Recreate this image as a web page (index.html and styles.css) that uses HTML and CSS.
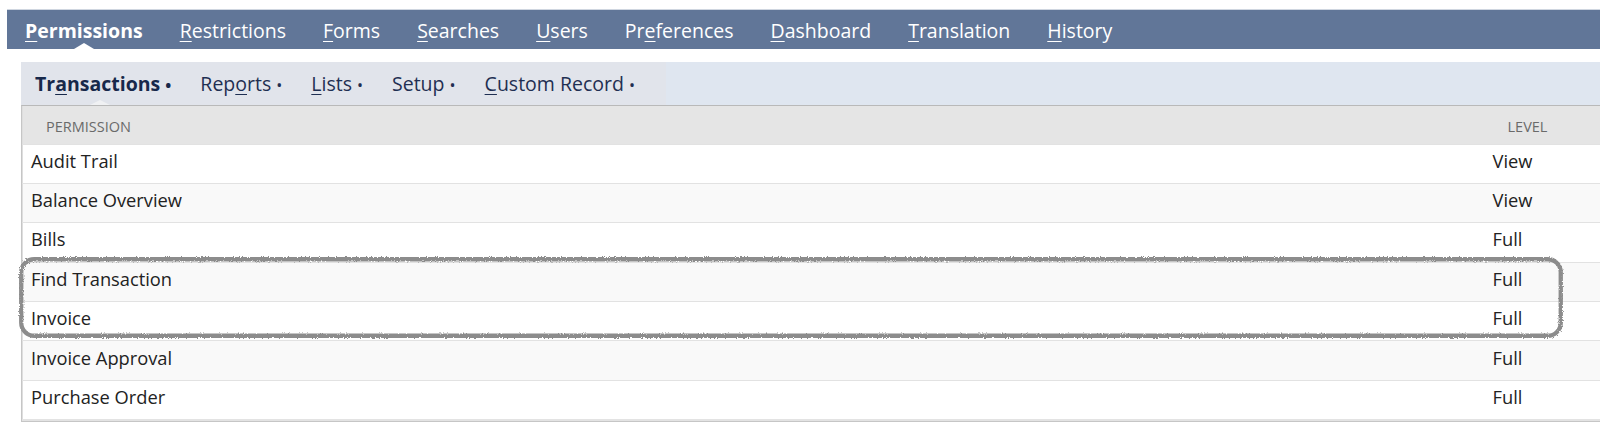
FILE: index.html
```html
<!DOCTYPE html>
<html lang="en">
<head>
    <meta charset="UTF-8">
    <meta name="viewport" content="width=device-width, initial-scale=1.0">
    <title>Role Permissions</title>
    <link rel="stylesheet" href="styles.css">
</head>
<body>
    <!-- main tabs -->
    <div class="topnav">
        <a class="tab active" href="#"><u>P</u>ermissions</a>
        <a class="tab" href="#"><u>R</u>estrictions</a>
        <a class="tab" href="#"><u>F</u>orms</a>
        <a class="tab" href="#"><u>S</u>earches</a>
        <a class="tab" href="#"><u>U</u>sers</a>
        <a class="tab" href="#">Pr<u>e</u>ferences</a>
        <a class="tab" href="#"><u>D</u>ashboard</a>
        <a class="tab" href="#"><u>T</u>ranslation</a>
        <a class="tab" href="#"><u>H</u>istory</a>
    </div>

    <!-- sub tabs -->
    <div class="subbar">
        <div class="subtabs">
            <a class="subtab active" href="#">Tr<u>a</u>nsactions <span class="dot">•</span></a>
            <a class="subtab" href="#">Rep<u>o</u>rts <span class="dot">•</span></a>
            <a class="subtab" href="#"><u>L</u>ists <span class="dot">•</span></a>
            <a class="subtab" href="#">Setup <span class="dot">•</span></a>
            <a class="subtab" href="#"><u>C</u>ustom Record <span class="dot">•</span></a>
        </div>
    </div>

    <div class="tablewrap">
        <table class="perms">
            <colgroup>
                <col class="col-name">
                <col class="col-level">
            </colgroup>
            <thead>
                <tr>
                    <th>Permission</th>
                    <th>Level</th>
                </tr>
            </thead>
            <tbody>
                <tr><td>Audit Trail</td><td>View</td></tr>
                <tr><td>Balance Overview</td><td>View</td></tr>
                <tr><td>Bills</td><td>Full</td></tr>
                <tr><td>Find Transaction</td><td>Full</td></tr>
                <tr><td>Invoice</td><td>Full</td></tr>
                <tr><td>Invoice Approval</td><td>Full</td></tr>
                <tr><td>Purchase Order</td><td>Full</td></tr>
            </tbody>
        </table>

        <!-- hand drawn highlight around two rows -->
        <svg class="marker" width="1556" height="92" viewBox="0 0 1556 92">
            <defs>
                <filter id="rough" x="-2%" y="-20%" width="104%" height="140%">
                    <feTurbulence type="fractalNoise" baseFrequency="0.95" numOctaves="2" seed="3" result="noise"/>
                    <feDisplacementMap in="SourceGraphic" in2="noise" scale="3"/>
                </filter>
            </defs>
            <rect x="7.25" y="7.25" width="1539.5" height="76.5" rx="13" ry="13" fill="none" stroke="#8c8c8c" stroke-width="4.3" filter="url(#rough)"/>
        </svg>
    </div>
</body>
</html>
```

FILE: styles.css
```css
*{
    margin: 0px;
    padding: 0px;
    box-sizing: border-box;
}
body{
    font-family: "Open Sans", "Liberation Sans", sans-serif;
    background: #ffffff;
    width: 1600px;
    overflow: hidden;
}
a{
    text-decoration: none;
    color: inherit;
}
u{
    text-underline-offset: 3px;
    text-decoration-thickness: 1px;
}

/* main tabs */
.topnav{
    margin: 9px 0 0 7px;
    height: 40px;
    background: #617698;
    border-top: 1px solid #cfd6e0;
    display: flex;
    align-items: center;
}
.tab{
    position: relative;
    color: #ffffff;
    font-size: 19.5px;
    padding: 2px 18px 0 18px;
    height: 39px;
    line-height: 37px;
    margin-right: 1px;
}
.tab.active{
    font-weight: 700;
}
.tab.active::after{
    content: "";
    position: absolute;
    left: 50%;
    bottom: 0;
    margin-left: -10px;
    border-left: 10px solid transparent;
    border-right: 10px solid transparent;
    border-bottom: 6px solid #ffffff;
}

/* sub tabs */
.subbar{
    margin: 13px 0 0 21px;
    height: 43px;
    background: #dfe6f0;
    display: flex;
}
.subtabs{
    display: flex;
    background: #e1e4eb;
    padding-right: 16px;
}
.subtab{
    position: relative;
    color: #1f2f52;
    font-size: 19.5px;
    padding: 1px 14px 0 14px;
    margin-right: 1px;
    line-height: 42px;
}
.subtab.active{
    font-weight: 700;
    color: #17284a;
}
.subtab.active::after{
    content: "";
    position: absolute;
    left: 50%;
    bottom: 0;
    margin-left: -13px;
    border-left: 10px solid transparent;
    border-right: 10px solid transparent;
    border-bottom: 5px solid #f0f1f3;
}
.dot{
    font-size: 16px;
}

/* table */
.tablewrap{
    position: relative;
    margin-left: 21px;
    width: 1600px;
    border: 1px solid #c6c6c6;
    border-top: 1px solid #b9b9b9;
}
.perms{
    width: 100%;
    border-collapse: collapse;
    table-layout: fixed;
    border-left: 1px solid #dedede;
    border-bottom: 2px solid #e3e3e3;
}
.col-name{
    width: 1462px;
}
th{
    background: #e5e5e5;
    color: #6a6a6a;
    font-size: 14.5px;
    font-weight: 400;
    text-transform: uppercase;
    text-align: left;
    height: 38px;
    padding: 4px 0 0 23px;
}
td{
    height: 39.4px;
    padding: 0 0 7px 8px;
    font-size: 18.3px;
    color: #222222;
    border-top: 1px solid #e2e2e2;
}
tbody tr:nth-child(even){
    background: #f9f9f9;
}

.marker{
    position: absolute;
    left: -8px;
    top: 146px;
}
```
